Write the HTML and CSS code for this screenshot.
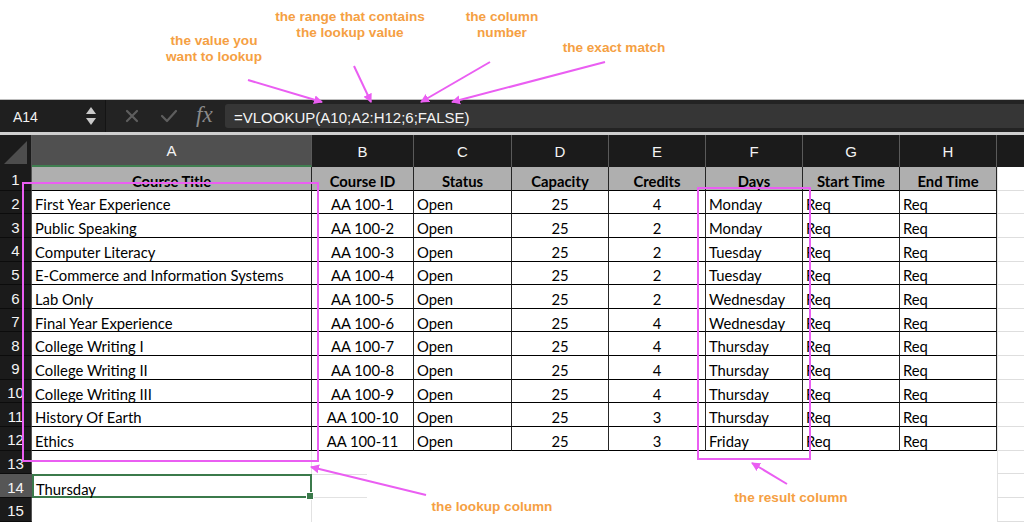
FILE: index.html
```html
<!DOCTYPE html>
<html>
<head>
<meta charset="utf-8">
<link rel="stylesheet" href="styles.css">
</head>
<body>
<div class="page">
  <div class="annot-area">
    <div class="note note-value">the value you<br>want to lookup</div>
    <div class="note note-range">the range that contains<br>the lookup value</div>
    <div class="note note-col">the column<br>number</div>
    <div class="note note-exact">the exact match</div>
  </div>

  <div class="formula-bar">
    <div class="namebox">
      <span class="nb-text">A14</span>
      <svg class="stepper" width="12" height="20" viewBox="0 0 12 20"><path d="M6 1 L11 8 L1 8 Z" fill="#c9c9c9"/><path d="M1 12 L11 12 L6 19 Z" fill="#c9c9c9"/></svg>
    </div>
    <div class="fb-icons">
      <svg class="ic-x" width="14" height="14" viewBox="0 0 14 14"><path d="M2 2 L12 12 M12 2 L2 12" stroke="#5e5e5e" stroke-width="2.2" stroke-linecap="round"/></svg>
      <svg class="ic-ok" width="18" height="14" viewBox="0 0 18 14"><path d="M2 7 L7 12 L16 2" stroke="#5e5e5e" stroke-width="2.2" fill="none" stroke-linecap="round" stroke-linejoin="round"/></svg>
      <span class="fx">fx</span>
    </div>
    <div class="formula-input">=VLOOKUP(A10;A2:H12;6;FALSE)</div>
  </div>
  <div class="bar-sep"></div>

  <div class="sheet">
    <div class="corner"><span class="tri"></span></div>
    <div class="colhead sel">A</div>
    <div class="colhead">B</div>
    <div class="colhead">C</div>
    <div class="colhead">D</div>
    <div class="colhead">E</div>
    <div class="colhead">F</div>
    <div class="colhead">G</div>
    <div class="colhead">H</div>
    <div class="colhead last"></div>

    <div class="rn">1</div>
    <div class="c th">Course Title</div>
    <div class="c th">Course ID</div>
    <div class="c th">Status</div>
    <div class="c th">Capacity</div>
    <div class="c th">Credits</div>
    <div class="c th">Days</div>
    <div class="c th">Start Time</div>
    <div class="c th">End Time</div>
    <div class="ext"></div>

    <div class="rn">2</div>
    <div class="c">First Year Experience</div><div class="c ctr">AA 100-1</div><div class="c">Open</div><div class="c ctr">25</div><div class="c ctr">4</div><div class="c">Monday</div><div class="c">Req</div><div class="c">Req</div><div class="ext"></div>

    <div class="rn">3</div>
    <div class="c">Public Speaking</div><div class="c ctr">AA 100-2</div><div class="c">Open</div><div class="c ctr">25</div><div class="c ctr">2</div><div class="c">Monday</div><div class="c">Req</div><div class="c">Req</div><div class="ext"></div>

    <div class="rn">4</div>
    <div class="c">Computer Literacy</div><div class="c ctr">AA 100-3</div><div class="c">Open</div><div class="c ctr">25</div><div class="c ctr">2</div><div class="c">Tuesday</div><div class="c">Req</div><div class="c">Req</div><div class="ext"></div>

    <div class="rn">5</div>
    <div class="c">E-Commerce and Information Systems</div><div class="c ctr">AA 100-4</div><div class="c">Open</div><div class="c ctr">25</div><div class="c ctr">2</div><div class="c">Tuesday</div><div class="c">Req</div><div class="c">Req</div><div class="ext"></div>

    <div class="rn">6</div>
    <div class="c">Lab Only</div><div class="c ctr">AA 100-5</div><div class="c">Open</div><div class="c ctr">25</div><div class="c ctr">2</div><div class="c">Wednesday</div><div class="c">Req</div><div class="c">Req</div><div class="ext"></div>

    <div class="rn">7</div>
    <div class="c">Final Year Experience</div><div class="c ctr">AA 100-6</div><div class="c">Open</div><div class="c ctr">25</div><div class="c ctr">4</div><div class="c">Wednesday</div><div class="c">Req</div><div class="c">Req</div><div class="ext"></div>

    <div class="rn">8</div>
    <div class="c">College Writing I</div><div class="c ctr">AA 100-7</div><div class="c">Open</div><div class="c ctr">25</div><div class="c ctr">4</div><div class="c">Thursday</div><div class="c">Req</div><div class="c">Req</div><div class="ext"></div>

    <div class="rn">9</div>
    <div class="c">College Writing II</div><div class="c ctr">AA 100-8</div><div class="c">Open</div><div class="c ctr">25</div><div class="c ctr">4</div><div class="c">Thursday</div><div class="c">Req</div><div class="c">Req</div><div class="ext"></div>

    <div class="rn">10</div>
    <div class="c">College Writing III</div><div class="c ctr">AA 100-9</div><div class="c">Open</div><div class="c ctr">25</div><div class="c ctr">4</div><div class="c">Thursday</div><div class="c">Req</div><div class="c">Req</div><div class="ext"></div>

    <div class="rn">11</div>
    <div class="c">History Of Earth</div><div class="c ctr">AA 100-10</div><div class="c">Open</div><div class="c ctr">25</div><div class="c ctr">3</div><div class="c">Thursday</div><div class="c">Req</div><div class="c">Req</div><div class="ext"></div>

    <div class="rn">12</div>
    <div class="c">Ethics</div><div class="c ctr">AA 100-11</div><div class="c">Open</div><div class="c ctr">25</div><div class="c ctr">3</div><div class="c">Friday</div><div class="c">Req</div><div class="c">Req</div><div class="ext"></div>

    <div class="rn">13</div>
    <div class="e ea"></div><div class="e"></div><div class="e"></div><div class="e"></div><div class="e"></div><div class="e"></div><div class="e"></div><div class="e"></div><div class="ext"></div>

    <div class="rn rn-sel">14</div>
    <div class="e ea active">Thursday<span class="handle"></span></div><div class="e eb"></div><div class="e"></div><div class="e"></div><div class="e"></div><div class="e"></div><div class="e"></div><div class="e"></div><div class="ext"></div>

    <div class="rn">15</div>
    <div class="e ea"></div><div class="e"></div><div class="e"></div><div class="e"></div><div class="e"></div><div class="e"></div><div class="e"></div><div class="e"></div><div class="ext"></div>
  </div>

  <div class="note note-lookup">the lookup column</div>
  <div class="note note-result">the result column</div>

  <svg class="overlay" width="1024" height="523" viewBox="0 0 1024 523">
    <defs>
      <marker id="ah" markerWidth="10" markerHeight="10" refX="8" refY="5" orient="auto" markerUnits="userSpaceOnUse">
        <path d="M0 0.5 L9 5 L0 9.5 Z" fill="#ea5ef2"/>
      </marker>
    </defs>
    <g stroke="#ea5ef2" stroke-width="2" fill="none">
      <rect x="23" y="183" width="295" height="278"/>
      <rect x="698" y="188" width="112" height="271"/>
      <line x1="248" y1="80" x2="322" y2="102" marker-end="url(#ah)"/>
      <line x1="354" y1="66" x2="371" y2="102" marker-end="url(#ah)"/>
      <line x1="490" y1="62" x2="421" y2="102" marker-end="url(#ah)"/>
      <line x1="605" y1="62" x2="452" y2="102" marker-end="url(#ah)"/>
      <line x1="426" y1="495" x2="311" y2="467" marker-end="url(#ah)"/>
      <line x1="787" y1="484" x2="752" y2="463" marker-end="url(#ah)"/>
    </g>
  </svg>
</div>
</body>
</html>
```

FILE: styles.css
```css
html, body {
  margin: 0;
  padding: 0;
  background: #fff;
}
body {
  width: 1024px;
  height: 523px;
  overflow: hidden;
}
.page {
  position: relative;
  width: 1024px;
  height: 523px;
  overflow: hidden;
}
.annot-area {
  position: relative;
  height: 99px;
  border-bottom: 1px solid #bdbdbd;
}
.note {
  position: absolute;
  font-family: "Liberation Sans", Arial, sans-serif;
  font-weight: bold;
  font-size: 13.6px;
  line-height: 16px;
  color: #f5a043;
  text-align: center;
  white-space: nowrap;
  z-index: 5;
}
.note-value { left: 164px; top: 33px; width: 100px; }
.note-range { left: 270px; top: 9px; width: 160px; }
.note-col { left: 452px; top: 9px; width: 100px; }
.note-exact { left: 554px; top: 40px; width: 120px; }
.note-lookup { left: 422px; top: 499px; width: 140px; }
.note-result { left: 721px; top: 490px; width: 140px; }

.formula-bar {
  display: flex;
  align-items: stretch;
  height: 32px;
  background: #232323;
}
.namebox {
  width: 106px;
  display: flex;
  align-items: center;
  justify-content: space-between;
  padding: 0 8px 0 13px;
  box-sizing: border-box;
  border-right: 1px solid #141414;
  background: #1f1f1f;
}
.nb-text {
  font-family: "Liberation Sans", Arial, sans-serif;
  font-size: 14px;
  color: #f2f2f2;
  padding-top: 1px;
}
.stepper { display: block; }
.fb-icons {
  width: 119px;
  display: flex;
  align-items: center;
  padding-left: 19px;
  box-sizing: border-box;
}
.ic-x { margin-right: 21px; }
.ic-ok { margin-right: 18px; }
.fx {
  font-family: "Liberation Serif", "Times New Roman", serif;
  font-style: italic;
  font-size: 23px;
  color: #8a8a8a;
  line-height: 1;
  margin-top: -3px;
}
.formula-input {
  flex: 1;
  margin: 4px 0 4px 0;
  background: #363636;
  border-radius: 3px 0 0 3px;
  font-family: "Liberation Sans", Arial, sans-serif;
  font-size: 15px;
  color: #f4f4f4;
  display: flex;
  align-items: center;
  padding: 2px 0 0 9px;
}
.bar-sep {
  height: 3px;
  background: #cfcfcf;
}

.sheet {
  display: grid;
  grid-template-columns: 32px 280px 102px 98px 97px 97px 97px 97px 97px 1fr;
  grid-template-rows: 32px;
  grid-auto-rows: 23.65px;
  font-family: Lato, "Liberation Sans", sans-serif;
  font-size: 14.8px;
  color: #000;
}
.corner {
  position: relative;
  background: #1b1b1b;
  border-right: 1px solid #555;
  box-sizing: border-box;
}
.tri {
  position: absolute;
  right: 4px;
  bottom: 3px;
  width: 0;
  height: 0;
  border-left: 23px solid transparent;
  border-bottom: 23px solid #4d4d4d;
}
.colhead {
  background: #1b1b1b;
  color: #f4f4f4;
  font-family: "Liberation Sans", Arial, sans-serif;
  font-size: 15px;
  display: flex;
  align-items: center;
  justify-content: center;
  border-right: 1px solid #5a5a5a;
  box-sizing: border-box;
}
.colhead.sel {
  background: #505050;
  border-bottom: 2px solid #3f7f50;
}
.colhead.last { border-right: none; }
.rn {
  background: #1b1b1b;
  color: #f4f4f4;
  font-family: "Liberation Sans", Arial, sans-serif;
  font-size: 15px;
  display: flex;
  align-items: center;
  justify-content: center;
  padding-top: 3px;
  border-right: 1px solid #555;
  border-bottom: 1px solid #0c0c0c;
  box-sizing: border-box;
}
.rn-sel { background: #565656; }
.c {
  border-right: 1px solid #262626;
  border-bottom: 1px solid #000;
  box-sizing: border-box;
  display: flex;
  align-items: center;
  padding: 5px 3px 0;
  white-space: nowrap;
  overflow: hidden;
  background: #fff;
}
.c.ctr { justify-content: center; }
.c.th {
  background: #afafaf;
  font-weight: bold;
  justify-content: center;
}
.ext {
  border-bottom: 1px solid #dedede;
  border-left: 1px solid #e2e2e2;
  box-sizing: border-box;
  background: #fff;
}
.e {
  background: #fff;
  box-sizing: border-box;
}
.e.ea {
  border-right: 1px solid #e2e2e2;
  display: flex;
  align-items: center;
  padding: 5px 3px 0;
}
.e.eb {
  background:
    linear-gradient(#e2e2e2, #e2e2e2) left top / 55px 1px no-repeat,
    linear-gradient(#e2e2e2, #e2e2e2) left bottom / 55px 1px no-repeat,
    #fff;
}
.e.active {
  position: relative;
  border: 2px solid #3b7a4b;
  padding-left: 2px;
}
.handle {
  position: absolute;
  right: -4px;
  bottom: -4px;
  width: 6px;
  height: 6px;
  background: #3b7a4b;
  border: 1px solid #fff;
}
.overlay {
  position: absolute;
  left: 0;
  top: 0;
  z-index: 4;
  pointer-events: none;
}
```
